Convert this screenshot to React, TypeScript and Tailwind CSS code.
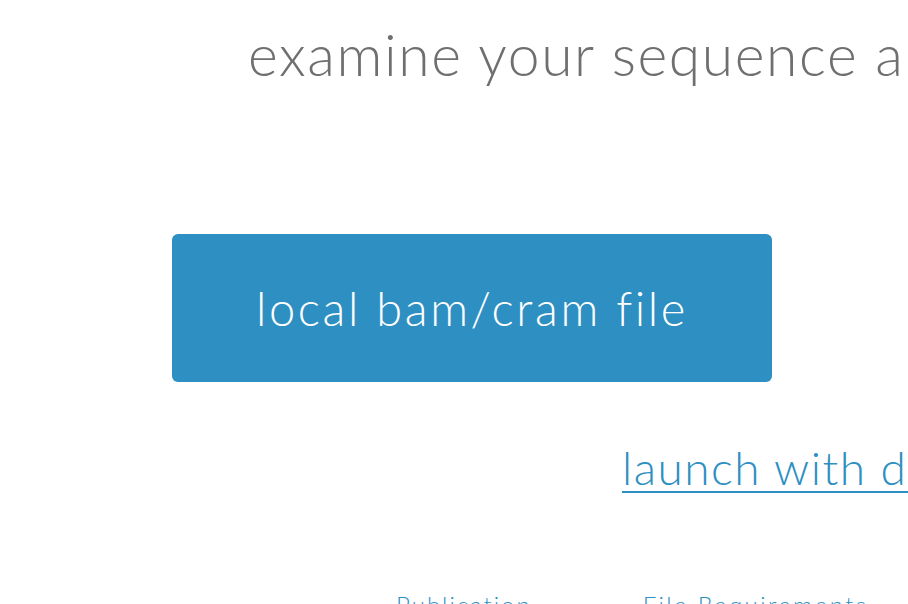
const App = () => {
  return (
    <div className="w-[908px] h-[604px] overflow-hidden bg-white font-['Lato','Open_Sans',sans-serif] font-light">
      {/* heading */}
      <h1 className="pl-[248px] pt-[16px] whitespace-nowrap text-[57px] leading-[76px] tracking-[1.6px] text-[#6f6f6f] font-light">
        examine your sequence alignment data
      </h1>

      {/* main button */}
      <div className="pt-[142px] pl-[172px]">
        <button className="w-[600px] h-[148px] rounded-[6px] bg-[#2e8fc2] text-white text-[47px] tracking-[2.6px] font-light">
          local bam/cram file
        </button>
      </div>

      {/* demo link */}
      <div className="pt-[58px] pl-[622px] whitespace-nowrap">
        <a href="#" className="text-[46px] leading-[56px] tracking-[1.5px] text-[#2e8fc2] underline underline-offset-[6px] decoration-2">
          launch with demo data
        </a>
      </div>

      {/* footer links */}
      <div className="flex pt-[94px] whitespace-nowrap text-[24px] leading-[30px] tracking-[2px] text-[#2e8fc2]">
        <a href="#" className="ml-[396px]">Publication</a>
        <a href="#" className="ml-[111px] tracking-[2.4px]">File Requirements</a>
      </div>
    </div>
  );
};

export default App;
